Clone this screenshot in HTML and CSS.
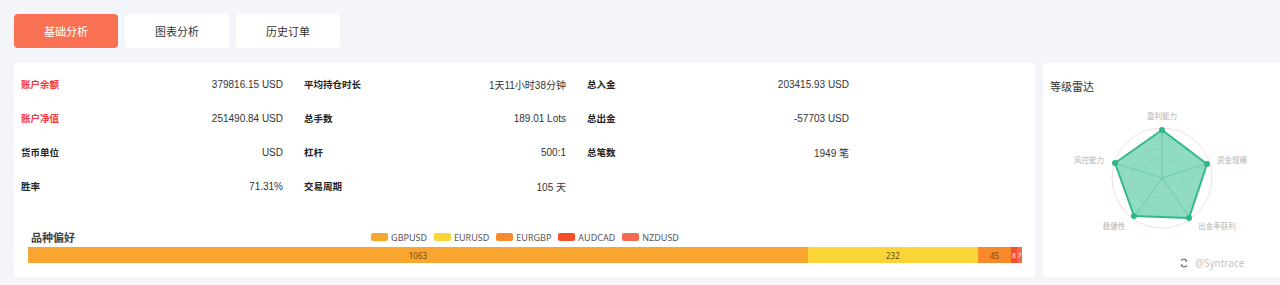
FILE: index.html
```html
<!DOCTYPE html>
<html lang="zh">
<head>
<meta charset="utf-8">
<link rel="stylesheet" href="styles.css">
</head>
<body>
<div class="page">
  <div class="tabs">
    <div class="tab active">基础分析</div>
    <div class="tab">图表分析</div>
    <div class="tab">历史订单</div>
  </div>
  <div class="main">
    <div class="card left-card">
      <div class="stats">
        <div class="stat"><span class="label red">账户余额</span><span class="value">379816.15 USD</span></div>
        <div class="stat"><span class="label">平均持仓时长</span><span class="value">1天11小时38分钟</span></div>
        <div class="stat"><span class="label">总入金</span><span class="value">203415.93 USD</span></div>
        <div class="stat"><span class="label red">账户净值</span><span class="value">251490.84 USD</span></div>
        <div class="stat"><span class="label">总手数</span><span class="value">189.01 Lots</span></div>
        <div class="stat"><span class="label">总出金</span><span class="value">-57703 USD</span></div>
        <div class="stat"><span class="label">货币单位</span><span class="value">USD</span></div>
        <div class="stat"><span class="label">杠杆</span><span class="value">500:1</span></div>
        <div class="stat"><span class="label">总笔数</span><span class="value">1949 笔</span></div>
        <div class="stat"><span class="label">胜率</span><span class="value">71.31%</span></div>
        <div class="stat"><span class="label">交易周期</span><span class="value">105 天</span></div>
      </div>
      <div class="pref">
        <div class="pref-head">
          <div class="pref-title">品种偏好</div>
          <div class="legend">
            <span class="lg"><i class="sw c1"></i>GBPUSD</span>
            <span class="lg"><i class="sw c2"></i>EURUSD</span>
            <span class="lg"><i class="sw c3"></i>EURGBP</span>
            <span class="lg"><i class="sw c4"></i>AUDCAD</span>
            <span class="lg"><i class="sw c5"></i>NZDUSD</span>
          </div>
          <div></div>
        </div>
        <div class="bar">
          <div class="seg c1" style="flex: 1063">1063</div>
          <div class="seg c2" style="flex: 232">232</div>
          <div class="seg c3" style="flex: 45">45</div>
          <div class="seg c4 tiny" style="flex: 8">8</div>
          <div class="seg c5 tiny" style="flex: 7">7</div>
        </div>
      </div>
    </div>
    <div class="card right-card">
      <div class="radar-title">等级雷达</div>
      <svg class="radar" width="237" height="120" viewBox="0 0 237 120">
        <g fill="none">
          <circle cx="119" cy="83" r="50" stroke="#f6dde2" stroke-width="1"/>
          <circle cx="119" cy="83" r="40" stroke="#eef0f3" stroke-width="1"/>
          <circle cx="119" cy="83" r="30" stroke="#eef0f3" stroke-width="1"/>
          <circle cx="119" cy="83" r="20" stroke="#eef0f3" stroke-width="1"/>
          <circle cx="119" cy="83" r="10" stroke="#eef0f3" stroke-width="1"/>
        </g>
        <polygon points="119,35 164,69 146,123 91,121 72,68" fill="#5ccaa4" fill-opacity="0.68" stroke="#33b88b" stroke-width="2" stroke-linejoin="round"/>
        <g stroke="#48b890" stroke-opacity="0.5" stroke-width="1">
          <line x1="119" y1="83" x2="119" y2="33"/>
          <line x1="119" y1="83" x2="166" y2="68"/>
          <line x1="119" y1="83" x2="148" y2="124"/>
          <line x1="119" y1="83" x2="90" y2="123"/>
          <line x1="119" y1="83" x2="71" y2="68"/>
        </g>
        <g fill="#2fb786">
          <circle cx="119" cy="35" r="3"/>
          <circle cx="164" cy="69" r="3"/>
          <circle cx="146" cy="123" r="3"/>
          <circle cx="91" cy="121" r="3"/>
          <circle cx="72" cy="68" r="3"/>
        </g>
        <g class="rl" fill="#b3b3b3">
          <text x="119" y="24" text-anchor="middle">盈利能力</text>
          <text x="174" y="68" text-anchor="start">资金规模</text>
          <text x="61" y="68" text-anchor="end">风控能力</text>
          <text x="71" y="134" text-anchor="middle">稳健性</text>
          <text x="174" y="134" text-anchor="middle">出金率获利</text>
        </g>
      </svg>
      <div class="watermark">
        <svg width="10" height="10" viewBox="0 0 10 10"><path d="M2 2.5 A3.5 3.5 0 0 1 8 3 M8 7.5 A3.5 3.5 0 0 1 2 7" fill="none" stroke="#777" stroke-width="1.3"/><path d="M6.5 1.5 L8.3 3.2 L6.2 3.8 Z M3.5 8.5 L1.7 6.8 L3.8 6.2 Z" fill="#777"/></svg>
        <span>@Syntrace</span>
      </div>
    </div>
  </div>
</div>
</body>
</html>
```

FILE: styles.css
```css
* { box-sizing: border-box; }
html, body {
  margin: 0;
  padding: 0;
  background: #f3f5fa;
  font-family: "Liberation Sans", "Noto Sans CJK SC", sans-serif;
  color: #333;
}
.page {
  padding: 14px 0 0 14px;
  height: 285px;
  overflow: hidden;
}
.tabs {
  display: flex;
  gap: 7px;
  height: 34px;
}
.tab {
  width: 104px;
  height: 34px;
  background: #fff;
  border-radius: 4px;
  display: flex;
  align-items: center;
  justify-content: center;
  font-family: "Noto Sans CJK SC", sans-serif;
  font-size: 11px;
  color: #333;
}
.tab.active {
  background: #f97153;
  color: #fff;
}
.main {
  display: flex;
  gap: 8px;
  margin-top: 15px;
}
.card {
  background: #fff;
  height: 214px;
  border-radius: 2px;
}
.left-card {
  width: 1021px;
  padding: 4px 0 14px 7px;
}
.right-card {
  flex: 1;
  position: relative;
  border-radius: 2px 0 0 2px;
}
.stats {
  display: grid;
  grid-template-columns: repeat(3, 262px);
  column-gap: 21px;
  grid-auto-rows: 34px;
}
.stat {
  display: flex;
  justify-content: space-between;
  align-items: center;
  font-size: 10px;
}
.label {
  font-weight: bold;
  font-family: "Noto Sans CJK SC", sans-serif;
  font-size: 9.5px;
  color: #222;
}
.label.red { color: #f5363a; }
.value {
  color: #333;
  font-family: "Liberation Sans", "Noto Sans CJK SC", sans-serif;
}
.pref {
  margin-top: 26px;
  padding-left: 7px;
  width: 1001px;
}
.pref-head {
  display: grid;
  grid-template-columns: 1fr auto 1fr;
  align-items: center;
  height: 14px;
  margin-bottom: 4px;
}
.pref-title {
  font-family: "Noto Sans CJK SC", sans-serif;
  font-weight: bold;
  font-size: 11px;
  color: #444;
  padding-left: 3px;
}
.legend {
  display: flex;
  align-items: center;
  gap: 7px;
  font-family: "Noto Sans", sans-serif;
  font-size: 9px;
  color: #555;
}
.lg {
  display: flex;
  align-items: center;
  gap: 3px;
}
.sw {
  display: inline-block;
  width: 17px;
  height: 8px;
  border-radius: 2px;
}
.c1 { background: #f9a630; }
.c2 { background: #fbd437; }
.c3 { background: #f98a2b; }
.c4 { background: #f44f29; }
.c5 { background: #f76853; }
.bar {
  display: flex;
  height: 16px;
  width: 994px;
}
.seg {
  display: flex;
  align-items: center;
  justify-content: center;
  font-family: "Noto Sans", sans-serif;
  font-size: 8px;
  color: #6b4a1a;
  overflow: hidden;
  min-width: 0;
}
.seg.tiny { color: #fde7e0; font-size: 7px; }
.radar-title {
  padding: 15px 0 0 7px;
  height: 32px;
  font-family: "Noto Sans CJK SC", sans-serif;
  font-size: 11px;
  color: #333;
}
.radar {
  display: block;
  overflow: visible;
}
.rl {
  font-family: "Noto Sans CJK SC", sans-serif;
  font-size: 7.5px;
}
.watermark {
  position: absolute;
  left: 136px;
  top: 193px;
  display: flex;
  align-items: center;
  gap: 6px;
  font-family: "Noto Sans", sans-serif;
  font-size: 10px;
  color: #c4c4c4;
}
```
